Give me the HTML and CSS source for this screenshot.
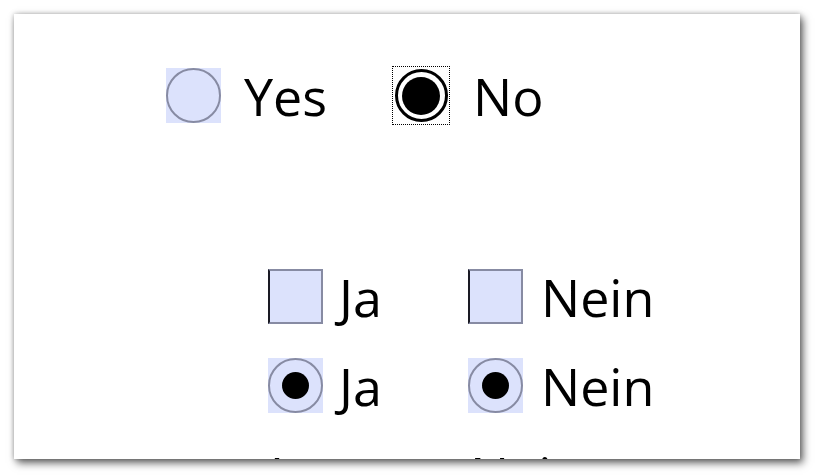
FILE: index.html
```html
<!DOCTYPE html>
<html lang="de">
    <head>
        <meta charset="utf-8">
        <title>Auswahl</title>
        <link rel="stylesheet" href="styles.css">
    </head>
    <body>
        <div class="panel">
            <div class="choice-row">
                <label class="opt opt-yes">
                    <span class="radio"></span>
                    <span class="txt">Yes</span>
                </label>
                <label class="opt opt-no">
                    <span class="focus-ring">
                        <span class="radio-dark"><span class="dot-big"></span></span>
                    </span>
                    <span class="txt">No</span>
                </label>
            </div>

            <div class="choice-grid">
                <label class="opt"><span class="check"></span><span class="txt">Ja</span></label>
                <label class="opt opt-right"><span class="check"></span><span class="txt">Nein</span></label>

                <label class="opt"><span class="radio"><span class="dot"></span></span><span class="txt">Ja</span></label>
                <label class="opt opt-right"><span class="radio"><span class="dot"></span></span><span class="txt">Nein</span></label>

                <label class="opt"><span class="txt">Ja</span></label>
                <label class="opt"><span class="txt">Nein</span></label>
            </div>
        </div>
    </body>
</html>
```

FILE: styles.css
```css
html, body {
    height: 100%;
}

body {
    margin: 0;
    padding-top: 14px;
    box-sizing: border-box;
    background-color: #ffffff;
    font-family: "Open Sans", "DejaVu Sans", sans-serif;
    color: #000000;
}

.panel {
    margin-left: 14px;
    width: 786px;
    height: 445px;
    background-color: #ffffff;
    overflow: hidden;
    box-shadow: 3px 4px 8px rgba(0, 0, 0, 0.6), 0 0 5px rgba(0, 0, 0, 0.25);
}

.choice-row {
    display: flex;
    align-items: center;
    padding: 52px 0 0 152px;
}

.opt {
    display: flex;
    align-items: center;
    font-size: 52px;
    height: 59px;
}

.opt-yes .txt {
    margin-left: 23px;
}

.opt-no {
    margin-left: 65px;
}

.opt-no .txt {
    margin-left: 23px;
}

.radio {
    box-sizing: border-box;
    width: 55px;
    height: 55px;
    background-color: #dce2fc;
    position: relative;
    flex: none;
}

.radio::before {
    content: "";
    position: absolute;
    left: 0;
    top: 0;
    width: 55px;
    height: 55px;
    box-sizing: border-box;
    border: 2.5px solid #878ba3;
    border-radius: 50%;
}

.dot {
    position: absolute;
    left: 14px;
    top: 14px;
    width: 27px;
    height: 27px;
    border-radius: 50%;
    background-color: #000000;
}

.focus-ring {
    box-sizing: border-box;
    width: 58px;
    height: 59px;
    border: 1px dotted #000000;
    display: flex;
    align-items: center;
    justify-content: center;
    flex: none;
}

.radio-dark {
    box-sizing: border-box;
    width: 53px;
    height: 53px;
    border: 3.5px solid #000000;
    border-radius: 50%;
    display: flex;
    align-items: center;
    justify-content: center;
}

.dot-big {
    width: 38px;
    height: 38px;
    border-radius: 50%;
    background-color: #000000;
}

.check {
    box-sizing: border-box;
    width: 55px;
    height: 55px;
    background-color: #dce2fc;
    border: 2.5px solid #878ba3;
    border-left: 2px solid #1a1a24;
    flex: none;
}

.choice-grid {
    display: grid;
    grid-template-columns: 200px 200px;
    grid-auto-rows: 55px;
    row-gap: 34px;
    padding: 144px 0 0 254px;
}

.choice-grid .opt {
    height: 55px;
}

.choice-grid .txt {
    margin-left: 16px;
}

.choice-grid .opt-right .txt {
    margin-left: 18px;
}

.choice-grid .opt .txt:only-child {
    margin-left: 2px;
}
```
